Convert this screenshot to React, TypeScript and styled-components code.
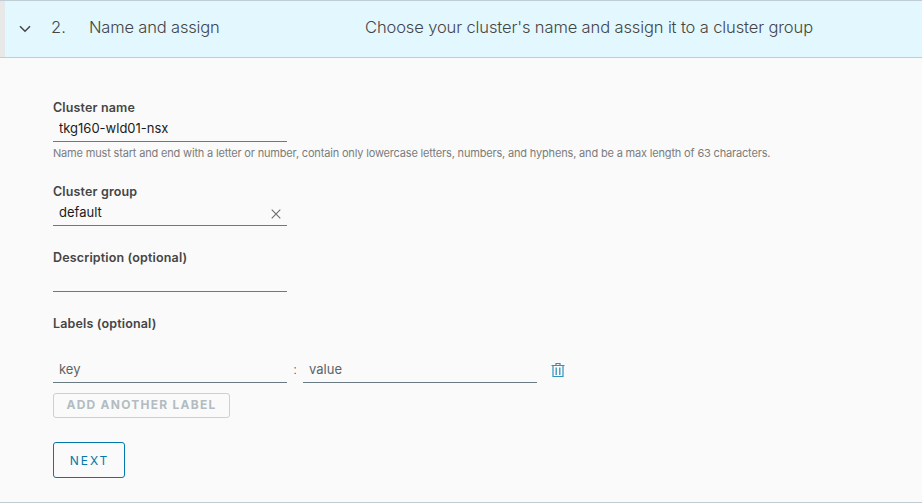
import React from 'react';
import styled, { createGlobalStyle } from 'styled-components';

const GlobalStyle = createGlobalStyle`
  *, *::before, *::after { box-sizing: border-box; }
  body { margin: 0; background: #fafafa; }
  input, button { font-family: inherit; margin: 0; }
`;

const Panel = styled.section`
  display: flex;
  flex-direction: column;
  height: 503px;
  overflow: hidden;
  background: #fafafa;
  border-top: 1px solid #c1cdd4;
  border-bottom: 1px solid #c1cdd4;
  font-family: Inter, 'Open Sans', sans-serif;
  color: #454545;
`;

const Header = styled.header`
  display: grid;
  grid-template-columns: 37px 38px 276px 1fr;
  align-items: center;
  height: 57px;
  padding: 0 0 4px 14px;
  background: #e3f7ff;
  border-bottom: 1px solid #c1cdd4;
  box-shadow: inset 5px 0 0 #e8e8e8;
  font-size: 16.5px;
  font-weight: 300;
  line-height: 24px;
  white-space: nowrap;
  color: #454545;
`;

const Chevron = styled.svg`
  display: block;
  margin: 4px 0 0 5px;
`;

const HeaderText = styled.span<{ $spacing?: number }>`
  letter-spacing: ${(p) => p.$spacing ?? 0}px;
`;

const Form = styled.form`
  display: flex;
  flex-direction: column;
  align-items: flex-start;
  padding: 39px 53px 0;
`;

const Field = styled.div<{ $gap: number }>`
  display: flex;
  flex-direction: column;
  margin-bottom: ${(p) => p.$gap}px;
`;

const Label = styled.label`
  height: 20px;
  padding-top: 1px;
  font-size: 12.5px;
  font-weight: 600;
  line-height: 20px;
  letter-spacing: 0.15px;
  white-space: nowrap;
`;

const InputBox = styled.div`
  display: flex;
  align-items: center;
  width: 234px;
  height: 25px;
  padding: 0 6px;
  border-bottom: 1px solid #6a7a81;
`;

const Input = styled.input`
  flex: 1;
  min-width: 0;
  height: 24px;
  padding: 0 0 2px;
  border: 0;
  outline: 0;
  background: transparent;
  font-size: 13px;
  line-height: 22px;
  color: #1b1b1b;
  &::placeholder { color: #5b6468; opacity: 1; }
`;

const ClearIcon = styled.svg`
  display: block;
  margin-top: 2px;
`;

const Hint = styled.p`
  width: 0;
  margin: 3px 0 0;
  font-size: 11px;
  line-height: 16px;
  letter-spacing: -0.17px;
  white-space: nowrap;
  color: #7c7c7c;
`;

const LabelRow = styled.div`
  display: flex;
  align-items: center;
  height: 25px;
`;

const Separator = styled.span`
  width: 16px;
  padding-bottom: 3px;
  text-align: center;
  font-size: 13px;
  font-weight: 300;
  color: #222;
`;

const IconButton = styled.button`
  display: flex;
  margin-left: 14px;
  padding: 0;
  border: 0;
  background: none;
`;

const OutlineButton = styled.button<{ $small?: boolean }>`
  display: flex;
  align-items: center;
  justify-content: center;
  width: ${(p) => (p.$small ? 177 : 72)}px;
  height: ${(p) => (p.$small ? 25 : 36)}px;
  margin-top: ${(p) => (p.$small ? 10 : 24)}px;
  padding: ${(p) => (p.$small ? '0 0 2px' : '0 0 0 1px')};
  border: 1px solid ${(p) => (p.$small ? '#c8d1d3' : '#0079ad')};
  border-radius: 3px;
  background: transparent;
  color: ${(p) => (p.$small ? '#b3bcc0' : '#0079ad')};
  font-size: 12px;
  font-weight: ${(p) => (p.$small ? 700 : 400)};
  letter-spacing: ${(p) => (p.$small ? 1.25 : 1.9)}px;
  white-space: nowrap;
`;

export default function App() {
  return (
    <>
      <GlobalStyle />
      <Panel>
        <Header>
          <Chevron width="12" height="8" viewBox="0 0 12 8" fill="none">
            <path d="M1 1.2 6 6.2 11 1.2" stroke="#454545" strokeWidth="1.5" />
          </Chevron>
          <HeaderText>2.</HeaderText>
          <HeaderText $spacing={-0.17}>Name and assign</HeaderText>
          <HeaderText $spacing={-0.12}>Choose your cluster's name and assign it to a cluster group</HeaderText>
        </Header>
        <Form onSubmit={(e) => e.preventDefault()}>
          <Field $gap={20}>
            <Label htmlFor="name">Cluster name</Label>
            <InputBox>
              <Input id="name" defaultValue="tkg160-wld01-nsx" />
            </InputBox>
            <Hint>
              Name must start and end with a letter or number, contain only lowercase letters,
              numbers, and hyphens, and be a max length of 63 characters.
            </Hint>
          </Field>
          <Field $gap={21}>
            <Label htmlFor="group">Cluster group</Label>
            <InputBox>
              <Input id="group" defaultValue="default" />
              <ClearIcon width="10" height="10" viewBox="0 0 10 10" fill="none">
                <path d="M.7.7 9.3 9.3M9.3.7.7 9.3" stroke="#6b6b6b" strokeWidth="1.1" />
              </ClearIcon>
            </InputBox>
          </Field>
          <Field $gap={21}>
            <Label htmlFor="description">Description (optional)</Label>
            <InputBox>
              <Input id="description" />
            </InputBox>
          </Field>
          <Field $gap={25}>
            <Label htmlFor="key">Labels (optional)</Label>
          </Field>
          <LabelRow>
            <InputBox>
              <Input id="key" placeholder="key" />
            </InputBox>
            <Separator>:</Separator>
            <InputBox>
              <Input placeholder="value" aria-label="value" />
            </InputBox>
            <IconButton type="button" aria-label="Remove label">
              <svg width="14" height="15" viewBox="0 0 14 15" fill="none" stroke="#3391bd">
                <path d="M.5 2.5h13M5 2.5v-2h4v2M2 3v10.5h10V3" strokeWidth="1.2" />
                <path d="M5.2 4.5v7.5M8.8 4.5v7.5" strokeWidth="1.3" />
              </svg>
            </IconButton>
          </LabelRow>
          <OutlineButton type="button" $small disabled>ADD ANOTHER LABEL</OutlineButton>
          <OutlineButton type="submit">NEXT</OutlineButton>
        </Form>
      </Panel>
    </>
  );
}
